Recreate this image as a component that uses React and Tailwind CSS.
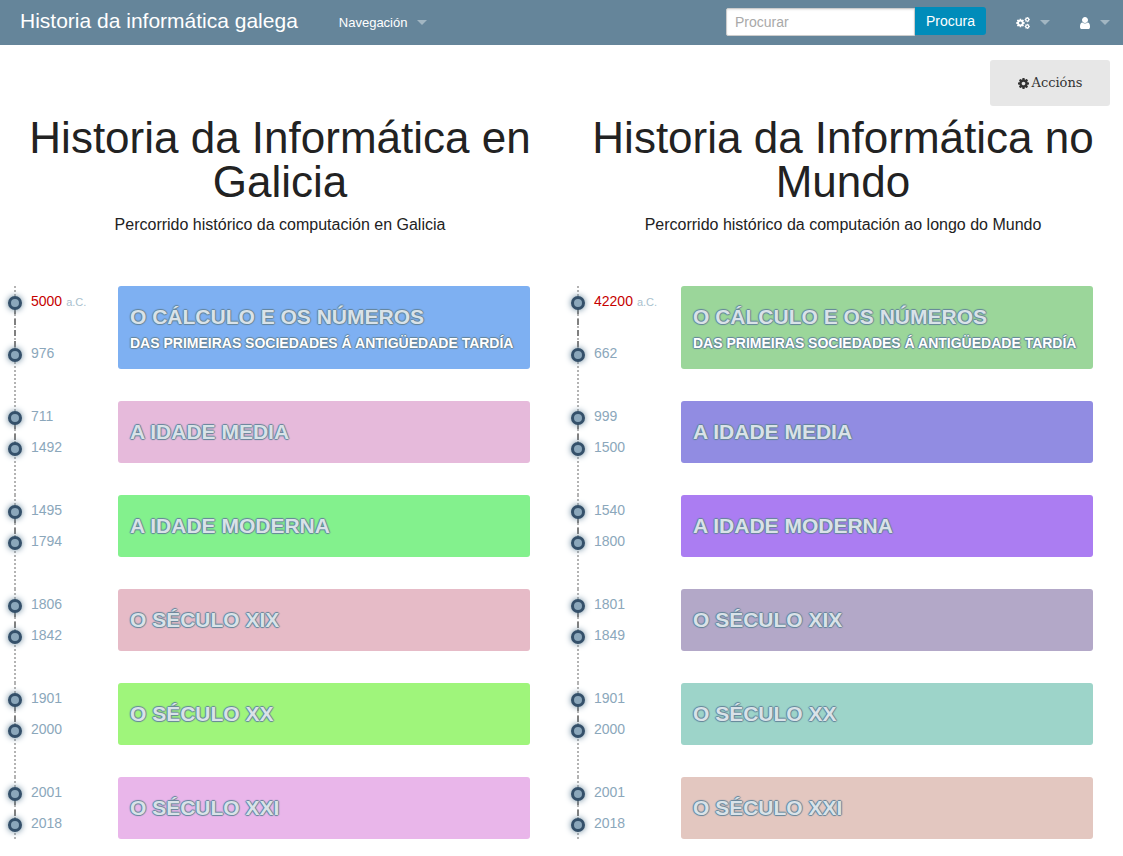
const galicia = {
  id: "galicia",
  title: "Historia da Informática en Galicia",
  subtitle: "Percorrido histórico da computación en Galicia",
  eras: [
    { from: "5000", bc: true, to: "976", name: "O CÁLCULO E OS NÚMEROS", detail: "DAS PRIMEIRAS SOCIEDADES Á ANTIGÜEDADE TARDÍA", color: "bg-[#7eb0f2]" },
    { from: "711", to: "1492", name: "A IDADE MEDIA", color: "bg-[#e6badb]" },
    { from: "1495", to: "1794", name: "A IDADE MODERNA", color: "bg-[#83f18d]" },
    { from: "1806", to: "1842", name: "O SÉCULO XIX", color: "bg-[#e6bbc7]" },
    { from: "1901", to: "2000", name: "O SÉCULO XX", color: "bg-[#9ff57b]" },
    { from: "2001", to: "2018", name: "O SÉCULO XXI", color: "bg-[#e9b6ea]" },
  ],
};

const mundo = {
  id: "mundo",
  title: "Historia da Informática no Mundo",
  subtitle: "Percorrido histórico da computación ao longo do Mundo",
  eras: [
    { from: "42200", bc: true, to: "662", name: "O CÁLCULO E OS NÚMEROS", detail: "DAS PRIMEIRAS SOCIEDADES Á ANTIGÜEDADE TARDÍA", color: "bg-[#9bd69a]" },
    { from: "999", to: "1500", name: "A IDADE MEDIA", color: "bg-[#918ce2]" },
    { from: "1540", to: "1800", name: "A IDADE MODERNA", color: "bg-[#ab7df2]" },
    { from: "1801", to: "1849", name: "O SÉCULO XIX", color: "bg-[#b3a8c8]" },
    { from: "1901", to: "2000", name: "O SÉCULO XX", color: "bg-[#9dd4c9]" },
    { from: "2001", to: "2018", name: "O SÉCULO XXI", color: "bg-[#e3c7c0]" },
  ],
};

// Gear centred on (768, 896) with an outer radius of 768.
const GEAR =
  "M1024 896q0-106-75-181t-181-75-181 75-75 181 75 181 181 75 181-75 75-181zm512-109v222q0 12-8 23t-20 13l-185 28q-19 54-39 91 35 50 107 138 10 12 10 25t-9 23q-27 37-99 108t-94 71q-12 0-26-9l-138-108q-44 23-91 38-16 136-29 186-7 28-36 28h-222q-14 0-24.5-8.5t-11.5-21.5l-28-184q-49-16-90-37l-141 107q-10 9-25 9-14 0-25-11-126-114-165-168-7-10-7-23 0-12 8-23 15-21 51-66.5t54-70.5q-27-50-41-99l-183-27q-13-2-21-12.5t-8-23.5v-222q0-12 8-23t19-13l186-28q14-46 39-92-40-57-107-138-10-12-10-24 0-10 9-23 26-36 98.5-107.5t94.5-71.5q13 0 26 10l138 107q44-23 91-38 16-136 29-186 7-28 36-28h222q14 0 24.5 8.5t11.5 21.5l28 184q49 16 90 37l142-107q9-9 24-9 13 0 25 10 129 119 165 170 7 8 7 22 0 12-8 23-15 21-51 66.5t-54 70.5q26 50 41 98l183 28q13 2 21 12.5t8 23.5z";

function CogIcon() {
  return (
    <svg aria-hidden="true" viewBox="0 128 1536 1536" className="size-[11px]" fill="currentColor">
      <path d={GEAR} />
    </svg>
  );
}

function CogsIcon() {
  return (
    <svg aria-hidden="true" viewBox="0 0 2048 1792" className="h-[12px] w-[14px]" fill="currentColor">
      <path d={GEAR} transform="translate(640 896) scale(.833) translate(-768 -896)" />
      <path d={GEAR} transform="translate(1664 384) scale(.5) translate(-768 -896)" />
      <path d={GEAR} transform="translate(1664 1408) scale(.5) translate(-768 -896)" />
    </svg>
  );
}

function UserIcon() {
  return (
    <svg aria-hidden="true" viewBox="256 128 1280 1536" className="h-[12px] w-[10px]" fill="currentColor">
      <path d="M1536 1399q0 109-62.5 187t-150.5 78h-854q-88 0-150.5-78t-62.5-187q0-85 8.5-160.5t31.5-152 58.5-131 94-89 134.5-34.5q131 128 313 128t313-128q76 0 134.5 34.5t94 89 58.5 131 31.5 152 8.5 160.5zm-256-887q0 159-112.5 271.5t-271.5 112.5-271.5-112.5-112.5-271.5 112.5-271.5 271.5-112.5 271.5 112.5 112.5 271.5z" />
    </svg>
  );
}

function Caret() {
  return <span aria-hidden="true" className="border-x-5 border-t-5 border-x-transparent border-t-white/40" />;
}

function TopBar() {
  return (
    <header className="flex h-[45px] items-center bg-[#65859a] pr-[13px] pl-5 text-white">
      <a href="#inicio" className="pb-1 text-[21px] leading-6 whitespace-nowrap">
        Historia da informática galega
      </a>
      <button type="button" className="ml-[41px] flex items-center gap-[10px] text-[13px]">
        Navegación
        <Caret />
      </button>
      <form className="ml-auto flex items-start pb-[2px]" onSubmit={(e) => e.preventDefault()}>
        <input
          type="search"
          aria-label="Procurar"
          placeholder="Procurar"
          className="mt-px h-7 w-[189px] rounded-l-[2px] border border-[#ccc] bg-white px-2 text-sm text-black/75 shadow-[inset_0_1px_2px_rgba(0,0,0,0.1)] placeholder:text-[#a9a9a9]"
        />
        <button type="submit" className="h-7 w-[71px] rounded-r-[3px] bg-[#008cba] text-sm">
          Procura
        </button>
      </form>
      <button type="button" aria-label="Configuración" className="ml-[30px] flex items-center gap-[10px]">
        <CogsIcon />
        <Caret />
      </button>
      <button type="button" aria-label="Usuario" className="ml-[30px] flex items-center gap-[10px]">
        <UserIcon />
        <Caret />
      </button>
    </header>
  );
}

function Mark({ year, bc }) {
  return (
    <div className="flex h-5 items-center gap-[9px] pl-2">
      <span className="mt-1 size-[14px] rounded-full border-3 border-[#34506a] bg-[#8ba7bb] shadow-[0_0_6px_#65859a]" />
      <span className={bc ? "text-sm leading-5 text-[#c60000]" : "text-sm leading-5 text-[#8ba7bb]"}>
        {year}
        {bc && <small className="ml-1 text-[11px] leading-none text-[#a9bfce]">a.C.</small>}
      </span>
    </div>
  );
}

const glow =
  "[text-shadow:-1px_0_1px_#65859a,1px_0_1px_#65859a,0_-1px_1px_#65859a,0_1px_1px_#65859a]";

function EraRow({ era, last }) {
  return (
    <li className={last ? "relative flex" : "relative flex pb-8"}>
      <span className="absolute top-0 bottom-0 left-[14px] w-[2px] bg-[repeating-linear-gradient(to_bottom,#b3b3b3_0_2px,transparent_2px_4px)]" />
      <div className="relative flex w-[118px] shrink-0 flex-col justify-between pt-[5px] pb-[6px]">
        <span className="absolute top-[22px] bottom-4 left-[14px] w-[2px] bg-[repeating-linear-gradient(to_bottom,#808080_0_6px,transparent_6px_11px)]" />
        <div className="relative">
          <Mark year={era.from} bc={era.bc} />
        </div>
        <div className="relative">
          <Mark year={era.to} />
        </div>
      </div>
      <a
        href={`#${era.from}`}
        className={`flex grow flex-col rounded-[3px] px-3 pt-4 font-bold ${era.detail ? "pb-[14px]" : "pb-4"} ${era.color} ${glow}`}
      >
        <span className="text-[21px] leading-[30px] text-[#d9e2e8]">{era.name}</span>
        {era.detail && <span className="text-sm leading-[23px] text-white">{era.detail}</span>}
      </a>
    </li>
  );
}

function Timeline({ data }) {
  return (
    <section aria-labelledby={data.id}>
      <div className="text-center text-[#222]">
        <h1 id={data.id} className="px-5 text-[44px] leading-[44px]">
          {data.title}
        </h1>
        <p className="mt-[9px] text-base leading-6">{data.subtitle}</p>
      </div>
      <ol className="mt-[49px] pr-[30px]">
        {data.eras.map((era, i) => (
          <EraRow key={era.name} era={era} last={i === data.eras.length - 1} />
        ))}
      </ol>
    </section>
  );
}

export default function App() {
  return (
    <div className="bg-white font-['Liberation_Sans',Arial,sans-serif]">
      <TopBar />
      <div className="flex justify-end pt-[15px] pr-[13px]">
        <button
          type="button"
          className="flex h-[46px] w-[120px] items-center justify-center gap-[3px] rounded-[3px] bg-[#e7e7e7] font-['DejaVu_Serif',serif] text-[13px] text-[#333]"
        >
          <CogIcon />
          Accións
        </button>
      </div>
      <main className="mt-[10px] grid grid-cols-2 gap-[3px] pb-4">
        <Timeline data={galicia} />
        <Timeline data={mundo} />
      </main>
    </div>
  );
}
